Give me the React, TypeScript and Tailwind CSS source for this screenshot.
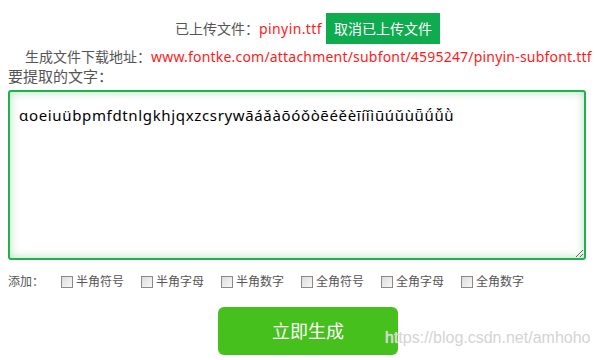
import React from 'react';

const options = ['半角符号', '半角字母', '半角数字', '全角符号', '全角字母', '全角数字'];

const sample = 'αoeiuübpmfdtnlgkhjqxzcsrywāáǎàōóǒòēéěèīíǐìūúǔùǖǘǚǜ';

export default function App() {
  return (
    <div
      className="relative h-[360px] w-[597px] overflow-hidden bg-white text-[#555]"
      style={{ fontFamily: '"Noto Sans", "Noto Sans CJK SC", sans-serif' }}
    >
      {/* Uploaded file */}
      <div className="flex h-[31px] items-center justify-center pl-[18px] mt-[13px] text-[14px] whitespace-nowrap">
        <span>已上传文件：</span>
        <span className="text-[#ff1a1a] tracking-[0.4px]">pinyin.ttf</span>
        <button
          type="button"
          className="ml-[4px] h-[31px] w-[114px] bg-[#0fab4f] text-[14px] text-white"
        >
          取消已上传文件
        </button>
      </div>

      {/* Download url */}
      <div className="mt-[1px] flex h-[22px] items-center pl-[25px] text-[14px] whitespace-nowrap">
        <span>生成文件下载地址：</span>
        <span className="text-[#ff1a1a] tracking-[0.2px]">
          www.fontke.com/attachment/subfont/4595247/pinyin-subfont.ttf
        </span>
      </div>

      <div className="flex h-[18px] items-center pl-[8px] text-[15px] leading-none">
        要提取的文字：
      </div>

      {/* Text area */}
      <div className="px-[8px] pt-[5px] pr-[11px]">
        <textarea
          defaultValue={sample}
          className="block h-[170px] w-full resize rounded-[3px] border-2 border-[#1fb14f] bg-white px-[9px] py-[12px] text-[15px] tracking-[0.65px] text-black shadow-[inset_0_0_10px_rgba(40,170,70,0.35)] outline-none"
          style={{ fontFamily: '"Noto Sans", "Noto Sans CJK SC", sans-serif' }}
        />
      </div>

      {/* Options */}
      <div className="mt-[14px] flex h-[16px] items-center pl-[8px] text-[12px]">
        <span className="w-[53px]">添加：</span>
        {options.map((label) => (
          <label key={label} className="flex w-[80px] items-center gap-[3px]">
            <span className="inline-block h-[12px] w-[12px] border border-[#8a8a8a] bg-gradient-to-br from-[#dcdcdc] to-[#f8f8f8]" />
            <span>{label}</span>
          </label>
        ))}
      </div>

      {/* Generate */}
      <div className="mt-[17px] flex pl-[218px]">
        <button
          type="button"
          className="h-[48px] w-[180px] rounded-[6px] bg-[#46c01c] text-[18px] text-white"
        >
          立即生成
        </button>
      </div>

      <div
        className="absolute left-[385px] top-[326px] text-[16px] text-[#d4d4d4]"
        style={{ fontFamily: '"Liberation Sans", Arial, sans-serif', textShadow: '0 0 1px #fff' }}
      >
        https://blog.csdn.net/amhoho
      </div>
    </div>
  );
}
